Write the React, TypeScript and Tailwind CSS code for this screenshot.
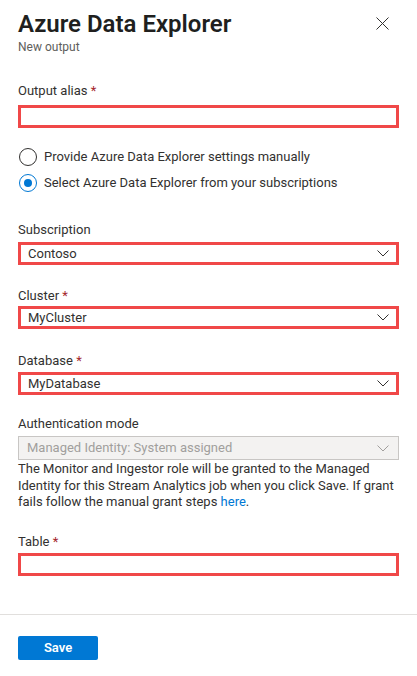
const Chevron = ({ color }: { color: string }) => (
  <svg width="12" height="7" viewBox="0 0 12 7" className="shrink-0">
    <path d="M0.5 0.5L6 6L11.5 0.5" fill="none" stroke={color} strokeWidth="1" />
  </svg>
);

const Label = ({ text, required, className = "" }: { text: string; required?: boolean; className?: string }) => (
  <div className={`h-[20px] text-[13px] leading-[20px] text-[#323130] ${className}`}>
    {text}
    {required && <span className="text-[#a4262c]"> *</span>}
  </div>
);

const RedInput = ({ className = "" }: { className?: string }) => (
  <div className={`h-[23px] border-[3px] border-[#f04848] ${className}`} />
);

const RedSelect = ({ value, className = "" }: { value: string; className?: string }) => (
  <div
    className={`flex h-[23px] items-center justify-between border-[3px] border-[#f04848] pl-[7px] pr-[7px] text-[13px] leading-[17px] text-[#323130] ${className}`}
  >
    <span>{value}</span>
    <Chevron color="#323130" />
  </div>
);

const Radio = ({ label, checked }: { label: string; checked?: boolean }) => (
  <div className="flex h-[26px] items-center">
    <div
      className={`ml-[1px] flex h-[18px] w-[18px] items-center justify-center rounded-full border ${
        checked ? "border-[#0078d4]" : "border-[#323130]"
      }`}
    >
      {checked && <div className="h-[8px] w-[8px] rounded-full bg-[#0078d4]" />}
    </div>
    <span className="ml-[7px] text-[13px] leading-[20px] text-[#323130]">{label}</span>
  </div>
);

export default function App() {
  return (
    <div className="flex h-[676px] w-[417px] flex-col bg-white font-[Roboto,sans-serif]">
      <div className="flex-1 px-[18px]">
        {/* header */}
        <div className="flex items-start justify-between pt-[8px]">
          <h1 className="text-[24px] font-semibold leading-[32px] text-[#201f1e]">Azure Data Explorer</h1>
          <svg width="13" height="13" viewBox="0 0 13 13" className="mr-[10px] mt-[9px]">
            <path d="M0.5 0.5L12.5 12.5M12.5 0.5L0.5 12.5" stroke="#323130" strokeWidth="1" />
          </svg>
        </div>
        <div className="-mt-[1px] text-[12px] leading-[16px] text-[#605e5c]">New output</div>

        <Label text="Output alias" required className="mt-[26px]" />
        <RedInput className="mt-[4px]" />

        <div className="mt-[16px]">
          <Radio label="Provide Azure Data Explorer settings manually" />
          <Radio label="Select Azure Data Explorer from your subscriptions" checked />
        </div>

        <Label text="Subscription" className="mt-[24px]" />
        <RedSelect value="Contoso" className="mt-[2px]" />

        <Label text="Cluster" required className="mt-[21px]" />
        <RedSelect value="MyCluster" />

        <Label text="Database" required className="mt-[22px]" />
        <RedSelect value="MyDatabase" className="mt-[1px]" />

        <Label text="Authentication mode" className="mt-[19px]" />
        <div className="mt-[2px] flex h-[24px] items-center justify-between border border-[#c8c6c4] bg-[#f3f2f1] pl-[8px] pr-[9px] text-[13px] leading-[20px] text-[#a19f9d]">
          <span>Managed Identity: System assigned</span>
          <Chevron color="#a19f9d" />
        </div>
        <p className="mt-[1px] text-[13px] leading-[16.5px] text-[#323130]">
          The Monitor and Ingestor role will be granted to the Managed
          <br />
          Identity for this Stream Analytics job when you click Save. If grant
          <br />
          fails follow the manual grant steps <span className="text-[#0078d4]">here</span>.
        </p>

        <Label text="Table" required className="mt-[21px]" />
        <RedInput className="mt-[1px]" />
      </div>

      <div className="h-[62px] border-t border-[#e1dfdd] px-[18px] pt-[20px]">
        <button className="h-[24px] w-[80px] rounded-[2px] bg-[#0078d4] text-[13px] font-semibold leading-[24px] text-white">
          Save
        </button>
      </div>
    </div>
  );
}
